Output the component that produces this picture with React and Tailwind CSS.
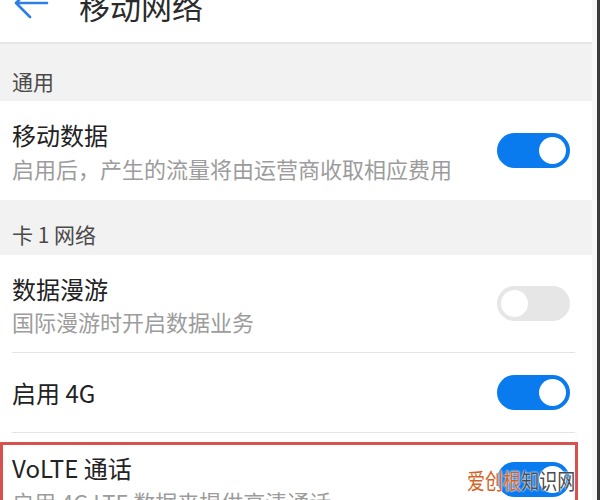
import React from 'react';

const font = { fontFamily: '"Noto Sans CJK SC", "Noto Sans", sans-serif' };

function Toggle({ on }) {
  return (
    <div className={`w-[73px] h-[35px] rounded-full p-[4px] flex items-center shrink-0 ${on ? 'bg-[#0a7bef] justify-end' : 'bg-[#e6e6e6] justify-start'}`}>
      <div className="w-[27px] h-[27px] rounded-full bg-white" />
    </div>
  );
}

function Section({ label, className }) {
  return (
    <div className={`shrink-0 bg-[#f2f2f2] pl-[12px] text-[21px] leading-[22px] text-[#4a4a4a] ${className}`}>{label}</div>
  );
}

export default function App() {
  return (
    <div className="w-[600px] h-[500px] overflow-hidden flex bg-white" style={font}>
      <div className="w-[592px] flex flex-col relative">
        {/* barra superior */}
        <div className="h-[44px] shrink-0 flex items-start border-b-2 border-[#e6e6e6] bg-white">
          <svg width="36" height="36" viewBox="0 0 36 36" className="ml-[13px] -mt-[14px] shrink-0">
            <path d="M34 17 H3 M3 17 L17 3 M3 17 L17 31" fill="none" stroke="#2c7fe6" strokeWidth="2.6" strokeLinecap="round" strokeLinejoin="round" />
          </svg>
          <div className="ml-[30px] -mt-[10px] text-[31px] leading-[31px] text-[#2b2b2b]">移动网络</div>
        </div>

        <Section label="通用" className="h-[57px] pt-[26px]" />

        <div className="h-[99px] shrink-0 flex items-center justify-between pl-[12px] pr-[22px]">
          <div className="flex flex-col">
            <div className="text-[24px] leading-[26px] text-[#222]">移动数据</div>
            <div className="mt-[9px] text-[22px] leading-[22px] text-[#9c9c9c]">启用后，产生的流量将由运营商收取相应费用</div>
          </div>
          <Toggle on />
        </div>

        <Section label="卡 1 网络" className="h-[55px] pt-[23px]" />

        <div className="h-[97px] shrink-0 flex items-center justify-between pl-[12px] pr-[22px]">
          <div className="flex flex-col">
            <div className="text-[24px] leading-[26px] text-[#222]">数据漫游</div>
            <div className="mt-[8px] text-[22px] leading-[22px] text-[#9c9c9c]">国际漫游时开启数据业务</div>
          </div>
          <Toggle />
        </div>
        <div className="h-px shrink-0 bg-[#e4e4e4] ml-[12px] mr-[17px]" />

        <div className="h-[79px] shrink-0 flex items-center justify-between pl-[12px] pr-[22px]">
          <div className="text-[24px] leading-[26px] text-[#222]">启用 4G</div>
          <Toggle on />
        </div>
        <div className="h-px shrink-0 bg-[#e4e4e4] ml-[12px] mr-[17px]" />

        <div className="h-[9px] shrink-0" />

        <div className="w-[578px] h-[80px] shrink-0 border-[3px] border-[#d9514f] flex justify-between pl-[9px] pr-[5px]">
          <div className="flex flex-col pt-[10px]">
            <div className="text-[24px] leading-[26px] text-[#222]">VoLTE 通话</div>
            <div className="mt-[9px] text-[22px] leading-[22px] text-[#9c9c9c] whitespace-nowrap">启用 4G LTE 数据来提供高清通话</div>
          </div>
          <div className="pt-[17px]">
            <Toggle on />
          </div>
        </div>

        {/* marca de agua */}
        <div className="absolute left-[467px] top-[465px] text-[22px] leading-[28px] whitespace-nowrap origin-left scale-x-[0.82]">
          <span className="text-[#d5621f]" style={{ textShadow: '0 0 2px #fff, 0 0 2px #fff' }}>爱创根</span>
          <span className="text-[#4b4b4b]" style={{ textShadow: '0 0 2px #fff, 0 0 2px #fff' }}>知识网</span>
        </div>
      </div>
      <div className="w-[5px] bg-[#f7f7f7]" />
      <div className="w-[3px] bg-[#3a3a3a]" />
    </div>
  );
}
